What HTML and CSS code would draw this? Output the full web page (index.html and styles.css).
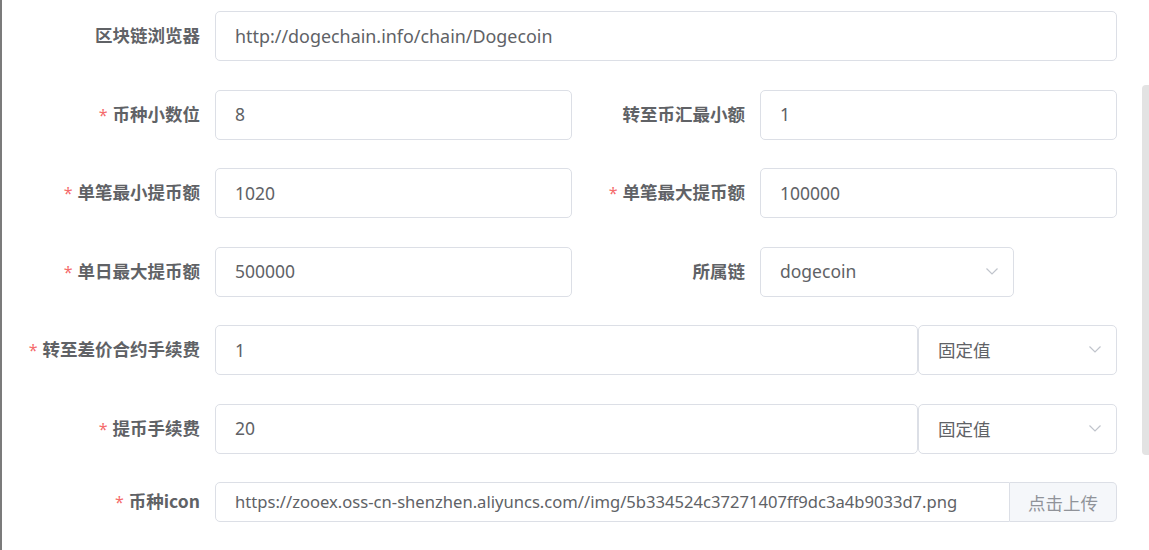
FILE: index.html
```html
<!DOCTYPE html>
<html lang="zh">
<head>
<meta charset="utf-8">
<link rel="stylesheet" href="styles.css">
</head>
<body>
<div class="page">
  <form class="form">
    <div class="row">
      <label class="label">区块链浏览器</label>
      <div class="input wide">http://dogechain.info/chain/Dogecoin</div>
    </div>
    <div class="row">
      <label class="label"><span class="req">*</span>币种小数位</label>
      <div class="input half">8</div>
      <label class="label label2">转至币汇最小额</label>
      <div class="input half">1</div>
    </div>
    <div class="row">
      <label class="label"><span class="req">*</span>单笔最小提币额</label>
      <div class="input half">1020</div>
      <label class="label label2"><span class="req">*</span>单笔最大提币额</label>
      <div class="input half">100000</div>
    </div>
    <div class="row">
      <label class="label"><span class="req">*</span>单日最大提币额</label>
      <div class="input half">500000</div>
      <label class="label label2">所属链</label>
      <div class="input select chain">dogecoin<svg class="chev" viewBox="0 0 12 7"><path d="M0.5 0.5 L6 6 L11.5 0.5" fill="none" stroke="#c0c4cc" stroke-width="1.2"/></svg></div>
    </div>
    <div class="row">
      <label class="label"><span class="req">*</span>转至差价合约手续费</label>
      <div class="input fee">1</div>
      <div class="input select type">固定值<svg class="chev" viewBox="0 0 12 7"><path d="M0.5 0.5 L6 6 L11.5 0.5" fill="none" stroke="#c0c4cc" stroke-width="1.2"/></svg></div>
    </div>
    <div class="row">
      <label class="label"><span class="req">*</span>提币手续费</label>
      <div class="input fee">20</div>
      <div class="input select type">固定值<svg class="chev" viewBox="0 0 12 7"><path d="M0.5 0.5 L6 6 L11.5 0.5" fill="none" stroke="#c0c4cc" stroke-width="1.2"/></svg></div>
    </div>
    <div class="row small">
      <label class="label"><span class="req">*</span>币种icon</label>
      <div class="group">
        <div class="input url">https://zooex.oss-cn-shenzhen.aliyuncs.com//img/5b334524c37271407ff9dc3a4b9033d7.png</div>
        <div class="append">点击上传</div>
      </div>
    </div>
  </form>
  <div class="scrollbar"></div>
</div>
</body>
</html>
```
FILE: styles.css
```css
* { box-sizing: border-box; }
html, body { margin: 0; padding: 0; background: #fff; }
body {
  font-family: "Noto Sans", "Noto Sans CJK SC", sans-serif;
  color: #606266;
  width: 1149px;
  height: 550px;
  overflow: hidden;
}
.page {
  position: relative;
  height: 550px;
  border-left: 2px solid #7b7b7b;
  padding: 11px 0 0 13px;
}
.form {
  display: flex;
  flex-direction: column;
  gap: 28.5px;
}
.row {
  display: flex;
  align-items: center;
  height: 50px;
}
.row.small { height: 40px; }
.label {
  width: 200px;
  padding-right: 15px;
  padding-bottom: 3px;
  text-align: right;
  font-family: "Noto Sans CJK SC", sans-serif;
  font-weight: 700;
  font-size: 17.5px;
  color: #606266;
  white-space: nowrap;
}
.label2 { width: 188px; }
.req {
  color: #f56c6c;
  font-weight: 400;
  font-size: 16px;
  margin-right: 5px;
  font-family: "Noto Sans", sans-serif;
}
.input {
  height: 50px;
  border: 1px solid #dcdfe6;
  border-radius: 5px;
  padding: 0 19px;
  padding-bottom: 1px;
  display: flex;
  align-items: center;
  font-size: 17.5px;
  color: #606266;
  white-space: nowrap;
  background: #fff;
}
.wide { width: 902px; font-size: 17.9px; }
.half { width: 357px; }
.chain { width: 254px; }
.fee { width: 703px; }
.type { width: 199px; }
.select { justify-content: space-between; padding-right: 15px; font-family: "Noto Sans CJK SC", sans-serif; }
.chain { font-family: "Noto Sans", sans-serif; }
.chev { width: 12px; height: 7px; }
.group { display: flex; width: 902px; height: 40px; }
.url {
  height: 40px;
  width: 795px;
  border-radius: 5px 0 0 5px;
  font-size: 16.6px;
}
.append {
  width: 107px;
  height: 40px;
  border: 1px solid #dcdfe6;
  border-left: 0;
  border-radius: 0 5px 5px 0;
  background: #f5f7fa;
  color: #909399;
  display: flex;
  align-items: center;
  justify-content: center;
  font-size: 17.5px;
  font-family: "Noto Sans CJK SC", sans-serif;
}
.scrollbar {
  position: absolute;
  right: 0;
  top: 85px;
  width: 7px;
  height: 370px;
  background: #e3e3e3;
  border-radius: 4px 0 0 4px;
}
```
